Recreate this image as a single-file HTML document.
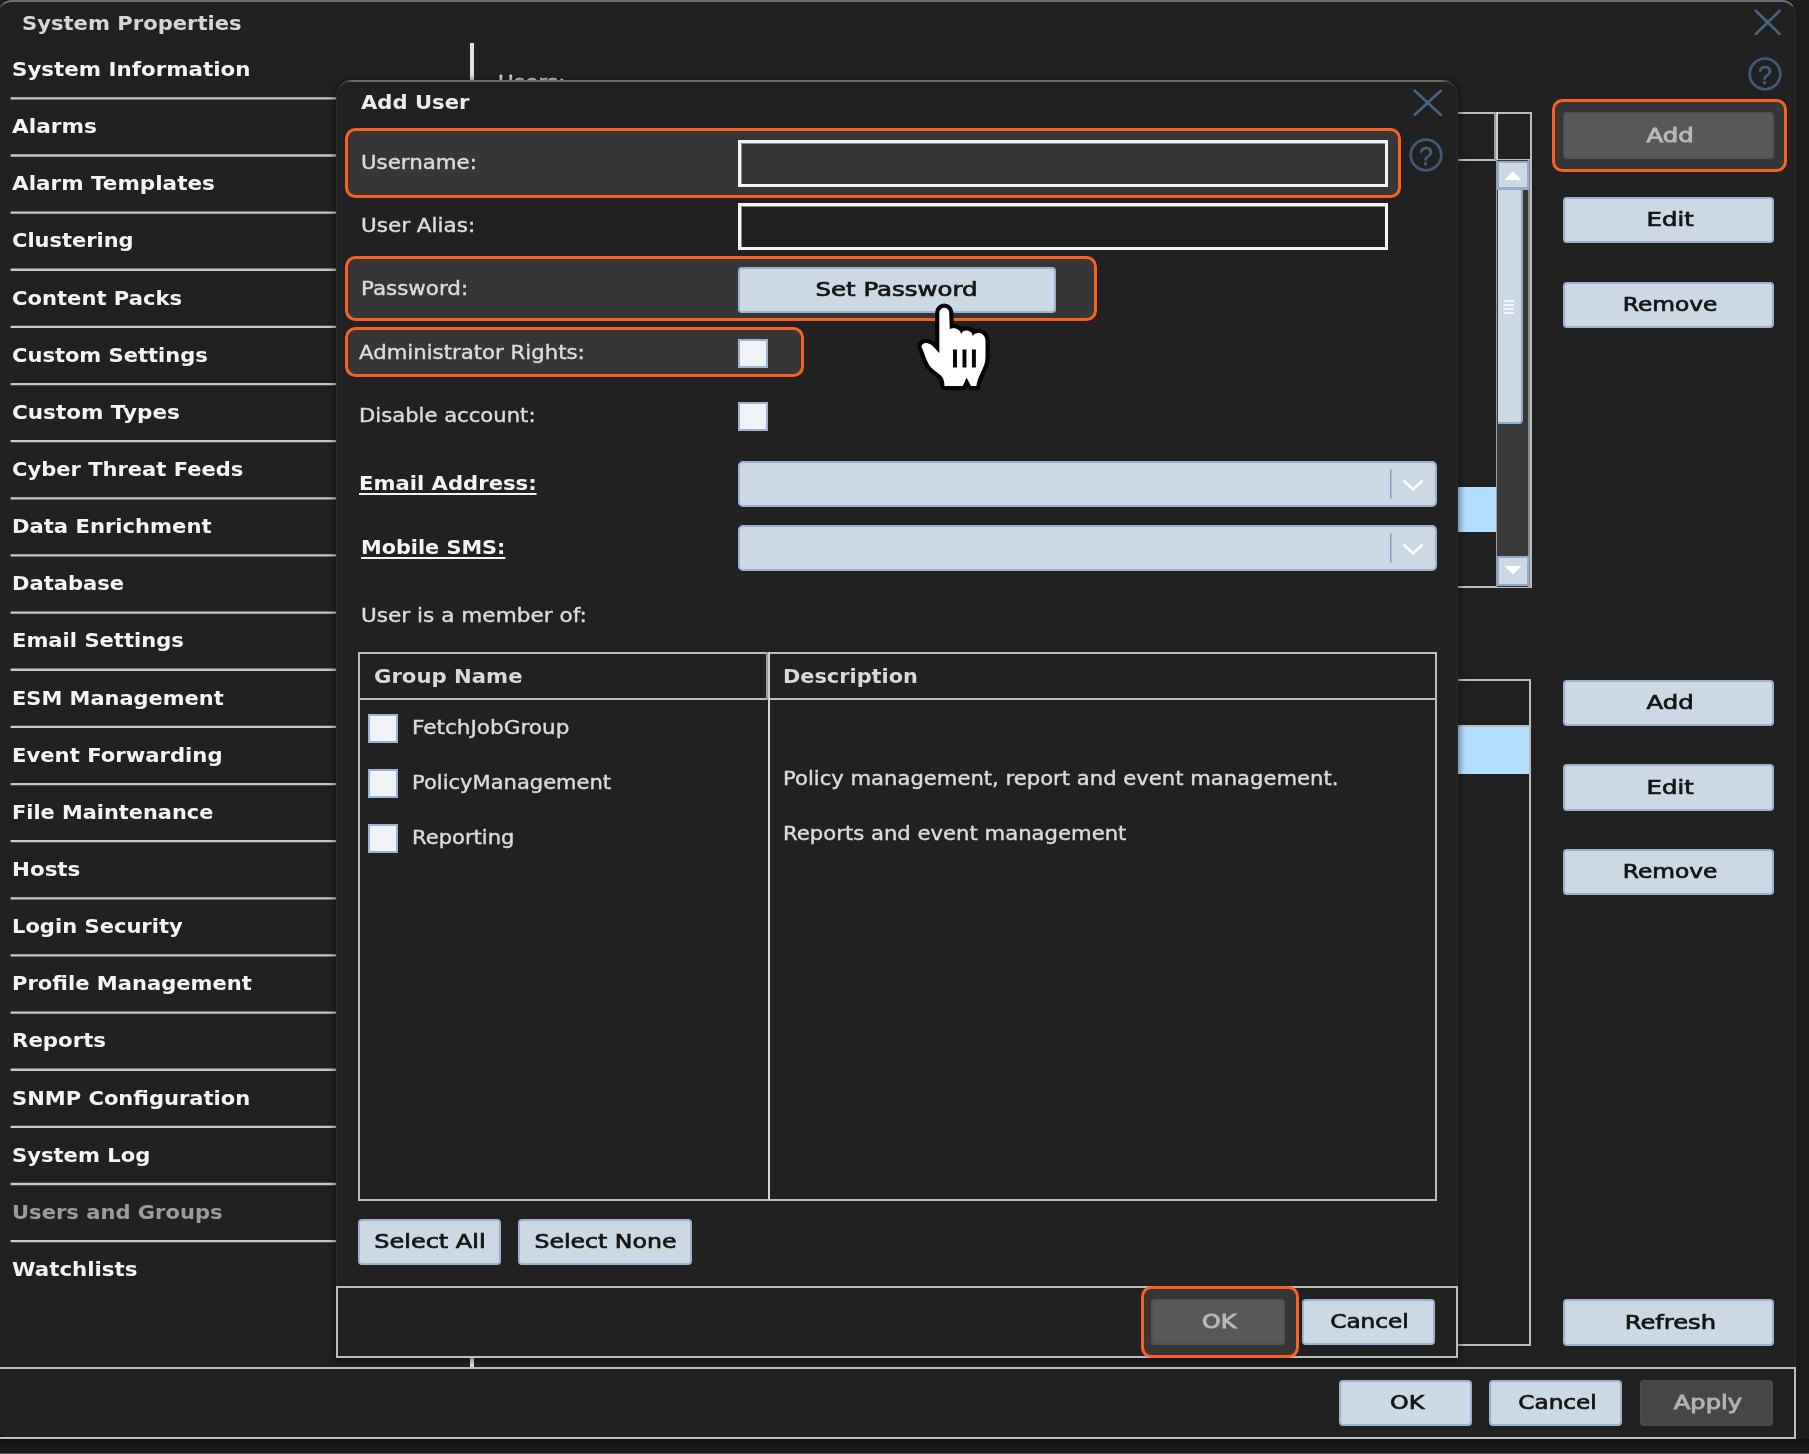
<!DOCTYPE html>
<html><head><meta charset="utf-8"><title>System Properties</title>
<style>
*{box-sizing:border-box;margin:0;padding:0}
html,body{width:1809px;height:1454px;overflow:hidden;background:#1b1b1b}
body{position:relative;font-family:"DejaVu Sans","Liberation Sans",sans-serif;font-size:19.8px;color:#e6e6e6}
#root{position:absolute;left:0;top:0;width:1809px;height:1454px;will-change:transform}
.abs{position:absolute}
#win{position:absolute;left:-2px;top:0;width:1798px;height:1439px;background:#212121;border-top:2.4px solid #6e6e6e;border-right:1px solid #2a2a2a;border-radius:14px 14px 0 14px}
#dlg{position:absolute;left:336px;top:80.200px;width:1122px;height:1278px;background:#212121;border-radius:15px 15px 0 0;border-top:2px solid #3a3a3a;border-right:1px solid #2c2c2c;border-left:1px solid #2c2c2c;box-shadow:0 1px 7px 1px rgba(0,0,0,.55)}
.t{position:absolute;display:block;height:30px;line-height:30px;white-space:nowrap;transform-origin:0 50%;color:#dcdcdc;-webkit-text-stroke:0.4px #dcdcdc}
.t.b{font-weight:bold;color:#f4f4f4;-webkit-text-stroke:0}
.t.ttl{color:#d6d6d6}
.t.dt{color:#ececec}
.t.th{color:#d9d9d9}
.t.u{text-decoration:underline;text-decoration-thickness:1.6px;text-underline-offset:2.5px}
.t.dim{color:#9c9c9c}
.sl{position:absolute;left:10.5px;width:325.5px;height:2.2px;background:#c3cccc}
.btn{position:absolute;display:flex;align-items:center;justify-content:center;color:#141414;background:#ccd8e4;border:2px solid #9db2cf;border-radius:4px;white-space:nowrap}
.btn span{display:block;line-height:30px;-webkit-text-stroke:0.7px currentColor;position:relative;top:0.3px}
.btn.dis{background:#585858;border-color:#515151;color:#b9b9b9}
.btn.dis2{background:#464648;border-color:#484c52;color:#aeb4b4}
.btn.dis span,.btn.dis2 span{-webkit-text-stroke-width:0.9px}
.hl{position:absolute;border:3px solid #f86122;border-radius:10.5px;background:#383635}
.inp{position:absolute;border:3px solid #f4f4f4;box-shadow:inset 1px 1px 0 #8a8a8a}
.cb{position:absolute;width:30px;height:29.3px;background:#eff3f8;border:2px solid #9db3d3}
.sel{position:absolute;background:#ccd8e4;border:2px solid #9db2cf;border-radius:5px}
.ln{position:absolute;background:#c8c8c8}
</style></head><body><div id="root">
<div id="win"></div>
<span class="t b ttl" style="left:21.90px;top:8.50px;transform:scaleX(1.0670);">System Properties</span>
<span class="t b si" style="left:12.10px;top:55.00px;transform:scaleX(1.0815);">System Information</span>
<span class="t b si" style="left:12.10px;top:112.14px;transform:scaleX(1.0940);">Alarms</span>
<span class="t b si" style="left:12.10px;top:169.28px;transform:scaleX(1.0873);">Alarm Templates</span>
<span class="t b si" style="left:12.10px;top:226.42px;transform:scaleX(1.0592);">Clustering</span>
<span class="t b si" style="left:12.10px;top:283.56px;transform:scaleX(1.0664);">Content Packs</span>
<span class="t b si" style="left:12.10px;top:340.70px;transform:scaleX(1.0623);">Custom Settings</span>
<span class="t b si" style="left:12.10px;top:397.84px;transform:scaleX(1.0874);">Custom Types</span>
<span class="t b si" style="left:12.10px;top:454.98px;transform:scaleX(1.0629);">Cyber Threat Feeds</span>
<span class="t b si" style="left:12.10px;top:512.12px;transform:scaleX(1.0673);">Data Enrichment</span>
<span class="t b si" style="left:12.10px;top:569.26px;transform:scaleX(1.0645);">Database</span>
<span class="t b si" style="left:12.10px;top:626.40px;transform:scaleX(1.0657);">Email Settings</span>
<span class="t b si" style="left:12.10px;top:683.54px;transform:scaleX(1.0590);">ESM Management</span>
<span class="t b si" style="left:12.10px;top:740.68px;transform:scaleX(1.0695);">Event Forwarding</span>
<span class="t b si" style="left:12.10px;top:797.82px;transform:scaleX(1.0550);">File Maintenance</span>
<span class="t b si" style="left:12.10px;top:854.96px;transform:scaleX(1.0823);">Hosts</span>
<span class="t b si" style="left:12.10px;top:912.10px;transform:scaleX(1.0641);">Login Security</span>
<span class="t b si" style="left:12.10px;top:969.24px;transform:scaleX(1.0648);">Profile Management</span>
<span class="t b si" style="left:12.10px;top:1026.38px;transform:scaleX(1.0754);">Reports</span>
<span class="t b si" style="left:12.10px;top:1083.52px;transform:scaleX(1.0638);">SNMP Configuration</span>
<span class="t b si" style="left:12.10px;top:1140.66px;transform:scaleX(1.0663);">System Log</span>
<span class="t b si dim" style="left:12.10px;top:1197.80px;transform:scaleX(1.0647);">Users and Groups</span>
<span class="t b si" style="left:12.10px;top:1254.94px;transform:scaleX(1.0790);">Watchlists</span>
<svg class="abs" style="left:0;top:0" width="340" height="1300" viewBox="0 0 340 1300"><path d="M10.6 98.35H336 M10.6 155.49H336 M10.6 212.63H336 M10.6 269.77H336 M10.6 326.91H336 M10.6 384.05H336 M10.6 441.19H336 M10.6 498.33H336 M10.6 555.47H336 M10.6 612.61H336 M10.6 669.75H336 M10.6 726.89H336 M10.6 784.03H336 M10.6 841.17H336 M10.6 898.31H336 M10.6 955.45H336 M10.6 1012.59H336 M10.6 1069.73H336 M10.6 1126.87H336 M10.6 1184.01H336 M10.6 1241.15H336" stroke="#c1caca" stroke-width="2.3" fill="none"/></svg>
<div class="ln" style="left:470.3px;top:42.5px;width:3.4px;height:1325px;background:#dde0e0"></div>
<span class="t " style="left:498.30px;top:68.20px;transform:scaleX(1.0870);">Users:</span>
<svg class="abs" style="left:1751.7px;top:6.7px" width="31.4" height="30.8" viewBox="-3 -3 31.4 30.8"><path d="M0 0 L25.4 24.8 M25.4 0 L0 24.8" stroke="#476483" stroke-width="2.7" fill="none"/></svg>
<svg class="abs" style="left:1744.5px;top:54.2px" width="40" height="40" viewBox="-20 -20 40 40"><circle cx="0" cy="0" r="15.3" stroke="#3f5977" stroke-width="2.8" fill="none"/><text x="0" y="9.600" text-anchor="middle" font-family="Liberation Sans, sans-serif" font-size="25" fill="#436180" stroke="#436180" stroke-width="0.5">?</text></svg>
<div class="abs" style="left:1398.90px;top:112.00px;width:132.80px;height:476.00px;border:2.2px solid #b9bdbf"></div>
<div class="ln" style="left:1400.00px;top:158.60px;width:130.40px;height:2.2px;background:#b9bdbf"></div>
<div class="ln" style="left:1494.20px;top:112.00px;width:3.4px;height:48.00px;background:linear-gradient(90deg,#9c9c9c 45%,#c8ccce 45%)"></div>
<div class="ln" style="left:1495.50px;top:160.00px;width:1.6px;height:427.00px;background:#9c9c9c"></div>
<div class="abs" style="left:1458px;top:486.7px;width:37.6px;height:45.8px;background:#b2ddff"></div>
<div class="abs" style="left:1497.2px;top:160px;width:30.8px;height:427px;background:#393939"></div>
<div class="abs" style="left:1528px;top:160px;width:1.6px;height:427px;background:#8e8e8e"></div>
<div class="abs" style="left:1496.5px;top:160.9px;width:32.8px;height:29px;background:#ccd8e4;border:2px solid #93abcb;border-bottom-width:3px"></div>
<div class="abs" style="left:1497.5px;top:189.8px;width:25.5px;height:234.7px;background:#ccd8e4;border:2px solid #93abcb;border-left:0;border-top:0;border-radius:0 0 4px 0"></div>
<div class="abs" style="left:1496.5px;top:556px;width:32.6px;height:30px;background:#ccd8e4;border:2px solid #93abcb"></div>
<svg class="abs" style="left:1497px;top:160px" width="33" height="427" viewBox="0 0 33 427"><path d="M7.500 20 L16 11.500 L24.500 20 Z" fill="#fff"/><path d="M7.500 406 L24.500 406 L16 414.500 Z" fill="#fff"/><path d="M6.500 141h10.500M6.500 145h10.500M6.500 149h10.500M6.500 153h10.500" stroke="#fff" stroke-width="1.5"/></svg>
<div class="abs" style="left:1398.90px;top:679.10px;width:132.60px;height:667.00px;border:2.2px solid #b9bdbf"></div>
<div class="ln" style="left:1400.00px;top:725.10px;width:130.00px;height:2.2px;background:#b9bdbf"></div>
<div class="abs" style="left:1458px;top:727.4px;width:71.4px;height:46.6px;background:#b2ddff"></div>
<div class="hl" style="left:1552.200px;top:99px;width:235px;height:73px"></div>
<div class="btn dis" style="left:1563.3px;top:112.2px;width:211.2px;height:46.5px"><span style="transform:scaleX(1.2329);left:1.6px">Add</span></div>
<div class="btn " style="left:1563.3px;top:196.7px;width:211.2px;height:46.5px"><span style="transform:scaleX(1.2329);left:1.6px">Edit</span></div>
<div class="btn " style="left:1563.3px;top:281.6px;width:211.2px;height:46.5px"><span style="transform:scaleX(1.1794);left:1.6px">Remove</span></div>
<div class="btn " style="left:1563.3px;top:679.8px;width:211.2px;height:46.5px"><span style="transform:scaleX(1.2329);left:1.6px">Add</span></div>
<div class="btn " style="left:1563.3px;top:764.2px;width:211.2px;height:46.5px"><span style="transform:scaleX(1.2329);left:1.6px">Edit</span></div>
<div class="btn " style="left:1563.3px;top:848.8px;width:211.2px;height:46.5px"><span style="transform:scaleX(1.1794);left:1.6px">Remove</span></div>
<div class="btn " style="left:1563.3px;top:1299.0px;width:211.2px;height:46.5px"><span style="transform:scaleX(1.2233);left:1.6px">Refresh</span></div>
<div class="abs" style="left:-3px;top:1366.8px;width:1799.200px;height:72.1px;border:2.2px solid #babec0"></div>
<div class="abs" style="left:0;top:1438.9px;width:1809px;height:14px;background:linear-gradient(180deg,#0e0e0e,#161616 40%,#1c1c1c)"></div>
<div class="abs" style="left:0;top:1452.6px;width:1809px;height:1.4px;background:#5a5a5a"></div>
<div class="btn " style="left:1339.3px;top:1379.6px;width:132.7px;height:46.0px"><span style="transform:scaleX(1.2022);left:1.6px">OK</span></div>
<div class="btn " style="left:1489.3px;top:1379.6px;width:132.7px;height:46.0px"><span style="transform:scaleX(1.1685);left:1.6px">Cancel</span></div>
<div class="btn dis2" style="left:1640.0px;top:1379.6px;width:132.7px;height:46.0px"><span style="transform:scaleX(1.2200);left:1.6px">Apply</span></div>
<div class="abs" id="dlg"></div>
<div class="abs" style="left:344px;top:80.1px;width:1106px;height:2.1px;background:linear-gradient(90deg,rgba(110,110,110,0),#6c6c6c 10px,#6c6c6c 1096px,rgba(110,110,110,0))"></div>
<span class="t b dt" style="left:361.00px;top:88.40px;transform:scaleX(1.0678);">Add User</span>
<svg class="abs" style="left:1411.3px;top:87.4px" width="33.5" height="31.4" viewBox="-3 -3 33.5 31.4"><path d="M0 0 L27.5 25.4 M27.5 0 L0 25.4" stroke="#476483" stroke-width="2.7" fill="none"/></svg>
<svg class="abs" style="left:1406.0px;top:134.8px" width="40" height="40" viewBox="-20 -20 40 40"><circle cx="0" cy="0" r="15.3" stroke="#3f5977" stroke-width="2.8" fill="none"/><text x="0" y="9.600" text-anchor="middle" font-family="Liberation Sans, sans-serif" font-size="25" fill="#436180" stroke="#436180" stroke-width="0.5">?</text></svg>
<div class="hl" style="left:344.8px;top:127.8px;width:1056.5px;height:70.3px"></div>
<span class="t " style="left:361.00px;top:147.60px;transform:scaleX(1.0781);">Username:</span>
<div class="inp" style="left:737.8px;top:140px;width:650.6px;height:46.8px"></div>
<span class="t " style="left:361.00px;top:210.90px;transform:scaleX(1.0875);">User Alias:</span>
<div class="inp" style="left:737.8px;top:203.3px;width:650.6px;height:46.8px"></div>
<div class="hl" style="left:344.8px;top:256.200px;width:752.4px;height:64.4px"></div>
<span class="t " style="left:361.30px;top:274.20px;transform:scaleX(1.0817);">Password:</span>
<div class="btn " style="left:737.8px;top:266.6px;width:318.5px;height:46.5px"><span style="transform:scaleX(1.2355);left:0px">Set Password</span></div>
<div class="hl" style="left:344.8px;top:326.8px;width:459px;height:50.5px"></div>
<span class="t " style="left:359.30px;top:337.60px;transform:scaleX(1.0741);">Administrator Rights:</span>
<div class="cb" style="left:737.6px;top:338.8px"></div>
<span class="t " style="left:359.30px;top:401.10px;transform:scaleX(1.0690);">Disable account:</span>
<div class="cb" style="left:737.6px;top:402.200px"></div>
<span class="t b u" style="left:359.30px;top:469.40px;transform:scaleX(1.0686);">Email Address:</span>
<div class="sel" style="left:737.8px;top:461px;width:698.8px;height:45.8px"></div>
<span class="t b u" style="left:361.30px;top:532.70px;transform:scaleX(1.0509);">Mobile SMS:</span>
<div class="sel" style="left:737.8px;top:525px;width:698.8px;height:45.8px"></div>
<svg class="abs" style="left:1385px;top:461px" width="53" height="46" viewBox="0 0 53 46"><path d="M5.700 8v30" stroke="#7e96b8" stroke-width="1.3"/><path d="M18.500 19.500 L28 28.500 L37.500 19.500" stroke="#fff" stroke-width="2.6" fill="none"/></svg>
<svg class="abs" style="left:1385px;top:525px" width="53" height="46" viewBox="0 0 53 46"><path d="M5.700 8v30" stroke="#7e96b8" stroke-width="1.3"/><path d="M18.500 19.500 L28 28.500 L37.500 19.500" stroke="#fff" stroke-width="2.6" fill="none"/></svg>
<span class="t " style="left:361.00px;top:600.90px;transform:scaleX(1.0918);">User is a member of:</span>
<div class="abs" style="left:357.50px;top:651.80px;width:1079.10px;height:549.50px;border:2.2px solid #b9bdbf"></div>
<div class="ln" style="left:358.00px;top:698.10px;width:1078.00px;height:2.2px;background:#b9bdbf"></div>
<div class="ln" style="left:766.10px;top:652.00px;width:4px;height:48.00px;background:linear-gradient(90deg,#9c9c9c 50%,#c8ccce 50%)"></div>
<div class="ln" style="left:768.10px;top:700.00px;width:2px;height:500.00px;background:#d2d4d6"></div>
<span class="t b th" style="left:374.30px;top:662.40px;transform:scaleX(1.0713);">Group Name</span>
<span class="t b th" style="left:782.60px;top:662.40px;transform:scaleX(1.0539);">Description</span>
<div class="cb" style="left:368.2px;top:713.8px"></div>
<span class="t " style="left:412.00px;top:712.60px;transform:scaleX(1.0907);">FetchJobGroup</span>
<div class="cb" style="left:368.2px;top:768.8px"></div>
<span class="t " style="left:412.00px;top:767.60px;transform:scaleX(1.0635);">PolicyManagement</span>
<span class="t " style="left:782.60px;top:763.70px;transform:scaleX(1.0684);">Policy management, report and event management.</span>
<div class="cb" style="left:368.2px;top:823.8px"></div>
<span class="t " style="left:412.00px;top:822.60px;transform:scaleX(1.0654);">Reporting</span>
<span class="t " style="left:782.60px;top:818.70px;transform:scaleX(1.0704);">Reports and event management</span>
<div class="btn " style="left:358.3px;top:1218.8px;width:142.7px;height:46.0px"><span style="transform:scaleX(1.2131);left:0px">Select All</span></div>
<div class="btn " style="left:518.3px;top:1218.8px;width:173.4px;height:46.0px"><span style="transform:scaleX(1.1945);left:0.6px">Select None</span></div>
<div class="abs" style="left:335.80px;top:1286.40px;width:1122.50px;height:72.00px;border:2.2px solid #b9bdbf"></div>
<div class="hl" style="left:1140.8px;top:1285.8px;width:158px;height:72px"></div>
<div class="btn dis" style="left:1151.0px;top:1299.0px;width:134.0px;height:46.2px"><span style="transform:scaleX(1.2022);left:1.6px">OK</span></div>
<div class="btn " style="left:1301.5px;top:1299.0px;width:133.0px;height:46.2px"><span style="transform:scaleX(1.1730);left:1.6px">Cancel</span></div>
<svg class="abs" style="left:900px;top:290px" width="110" height="110" viewBox="0 0 1454 1454"><path d="M520 300 A65 65 0 0 1 650 300 L658 520 C680 495 780 490 810 580 C830 520 940 515 965 610 C985 550 1130 545 1130 680 L1130 900 C1130 1020 1020 1150 1010 1270 L940 1270 L880 1160 L830 1270 L588 1270 C588 1215 575 1160 540 1130 C480 1080 420 1040 385 990 C340 920 320 830 290 765 C275 730 300 700 350 700 C420 705 470 780 520 835 Z" fill="#fff" stroke="#060606" stroke-width="112" stroke-linejoin="round" paint-order="stroke"/><path d="M727 785v240M852 785v240M977 785v240" stroke="#060606" stroke-width="52"/></svg>
</div></body></html>
